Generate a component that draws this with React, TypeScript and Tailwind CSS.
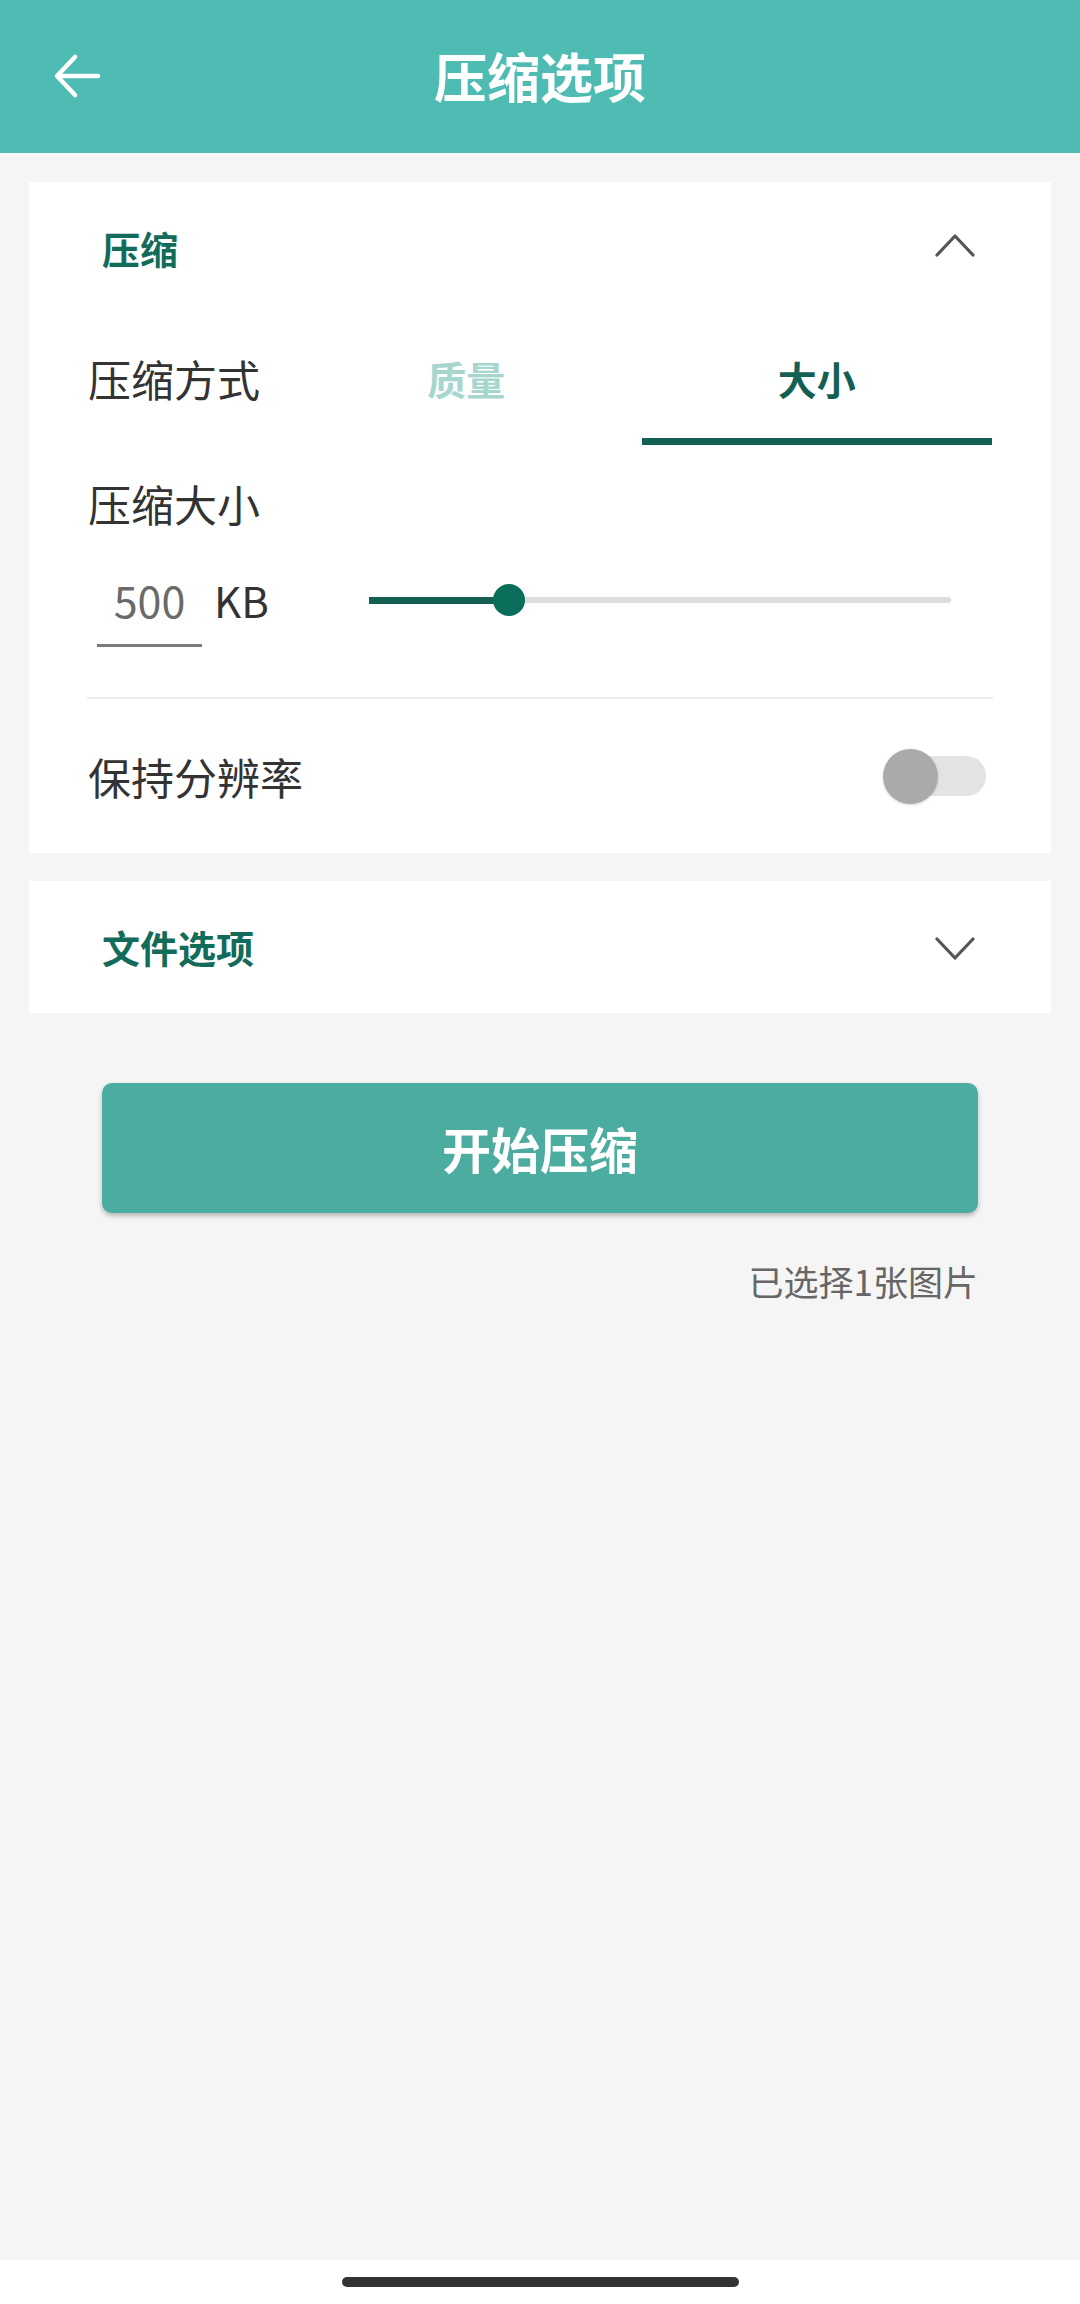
import React from "react";

const FONT = { fontFamily: '"Noto Sans CJK SC", "Noto Sans", Roboto, sans-serif' };

function Chevron({ up }: { up?: boolean }) {
  return (
    <svg width="40" height="24" viewBox="0 0 40 24" fill="none">
      <path
        d={up ? "M2 22 L20 3 L38 22" : "M2 2 L20 21 L38 2"}
        stroke="#555555"
        strokeWidth="3.2"
        strokeLinecap="round"
        strokeLinejoin="round"
      />
    </svg>
  );
}

export default function App() {
  return (
    <div className="w-[1080px] h-[2304px] bg-[#f5f5f5] flex flex-col" style={FONT}>
      {/* Header */}
      <div className="relative h-[153px] bg-[#4fbcb3] flex items-center justify-center shrink-0">
        <div className="absolute left-[53px] top-[53px]">
          <svg width="48" height="48" viewBox="0 0 48 48" fill="none">
            <path d="M45 23 H5 M22 4 L4 23 L22 42" stroke="#ffffff" strokeWidth="4.5" strokeLinecap="round" strokeLinejoin="round" />
          </svg>
        </div>
        <div className="text-white text-[53px] font-bold leading-none pb-[3px]">压缩选项</div>
      </div>

      {/* Card 1 */}
      <div className="mx-[29px] mt-[29px] bg-white flex flex-col shrink-0">
        <div className="h-[136px] flex items-center justify-between pl-[73px] pr-[76px]">
          <div className="text-[38px] font-bold text-[#136b5a] leading-none mb-[4px]">压缩</div>
          <div className="mb-[10px]">
            <Chevron up />
          </div>
        </div>
        <div className="flex items-stretch pl-[59px] pr-[59px] h-[127px]">
          <div className="w-[203px] flex items-center pb-[6px] text-[43px] text-[#333333] leading-none">压缩方式</div>
          <div className="flex-1 flex flex-col items-center justify-center pb-[6px] text-[39px] font-semibold text-[#a6d6cd] leading-none">质量</div>
          <div className="flex-1 flex flex-col">
            <div className="flex-1 flex items-center justify-center text-[39px] font-bold text-[#145f53] leading-none">大小</div>
            <div className="h-[7px] bg-[#145f53]" />
          </div>
        </div>
        <div className="pl-[59px] mt-[33px] text-[43px] text-[#333333] leading-[50px]">压缩大小</div>
        <div className="flex items-start h-[84px] pl-[68px] mt-[35px]">
          <div className="w-[105px] h-[84px] border-b-[3px] border-[#7a7a7a] flex items-center justify-center pb-[8px] text-[43px] text-[#6a6a6a] leading-none">
            500
          </div>
          <div className="ml-[12px] h-[84px] flex items-center pb-[11px] text-[42px] text-[#333333] leading-none">KB</div>
          <div className="relative ml-[100px] w-[582px] h-[74px] flex items-center">
            <div className="w-full h-[6px] bg-[#dddddd] rounded-full" />
            <div className="absolute left-0 top-[34px] w-[140px] h-[7px] bg-[#135f54]" />
            <div className="absolute left-[124px] top-[21px] w-[32px] h-[32px] rounded-full bg-[#0b6e5a]" />
          </div>
        </div>
        <div className="mx-[58px] mt-[50px] h-[2px] bg-[#ebebeb]" />
        <div className="h-[154px] flex items-center justify-between pl-[59px] pr-[65px]">
          <div className="text-[43px] text-[#333333] leading-none">保持分辨率</div>
          <div className="relative w-[103px] h-[55px] flex items-center justify-end">
            <div className="w-[96px] h-[40px] rounded-full bg-[#e3e3e3]" />
            <div className="absolute left-0 top-0 w-[55px] h-[55px] rounded-full bg-[#aaaaaa] shadow-[0_1px_3px_rgba(0,0,0,0.15)]" />
          </div>
        </div>
      </div>

      {/* Card 2 */}
      <div className="mx-[29px] mt-[28px] h-[132px] bg-white flex items-center justify-between pl-[73px] pr-[76px] shrink-0">
        <div className="text-[38px] font-bold text-[#136b5a] leading-none">文件选项</div>
        <div className="mt-[4px]">
          <Chevron />
        </div>
      </div>

      {/* Button */}
      <div className="mx-[102px] mt-[70px] h-[130px] rounded-[10px] bg-[#4cac9f] shadow-[0_3px_5px_rgba(0,0,0,0.25)] flex items-center justify-center shrink-0">
        <div className="text-white text-[49px] font-bold leading-none pb-[2px]">开始压缩</div>
      </div>

      <div className="mt-[48px] pr-[102px] text-right text-[35px] text-[#666666] leading-[40px] shrink-0">已选择1张图片</div>

      <div className="flex-1" />
      <div className="h-[44px] bg-white flex justify-center pt-[17px] shrink-0">
        <div className="w-[397px] h-[10px] rounded-full bg-[#333333]" />
      </div>
    </div>
  );
}
